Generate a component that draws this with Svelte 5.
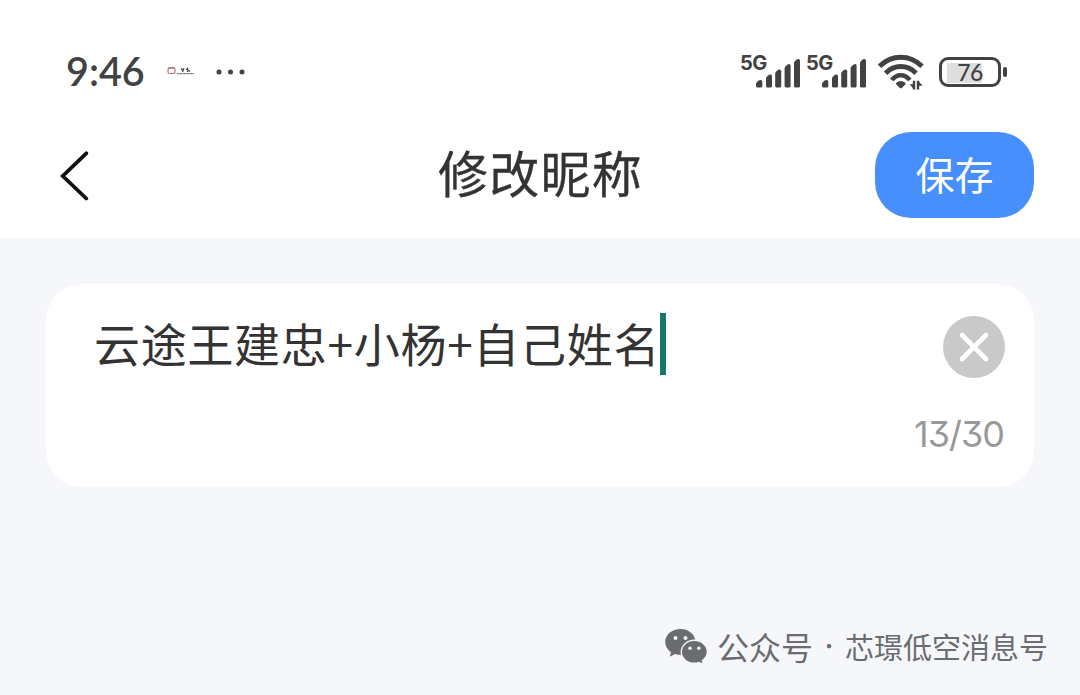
<script lang="ts">
    let name = $state("云途王建忠+小杨+自己姓名");
    const max = 30;
    let count = $derived(name.length);

    const battery = 76;

    const clearName = () => {
        name = "";
    }
</script>

{#snippet signal()}
    <div class="signal">
        <span class="net">5G</span>
        <svg class="bars" width="45" height="30" viewBox="0 0 45 30">
            <path d="M0 28v-2q0-1 1-2l2-1.800q3.300-1 3.300 1.500v4.300q0 1.500-1.500 1.500H1.500Q0 29.500 0 28z" />
            <path d="M10 28v-7.500q0-1 1-2l2-1.800q3-1 3 1.500V28q0 1.500-1.500 1.500h-3Q10 29.500 10 28z" />
            <path d="M19.200 28V15.500q0-1 1-2l2-1.800q3-1 3 1.500V28q0 1.500-1.500 1.500h-3q-1.500 0-1.500-1.500z" />
            <path d="M28.600 28V10.200q0-1 1-2l2-1.800q3-1 3 1.500V28q0 1.500-1.500 1.500h-3q-1.500 0-1.500-1.500z" />
            <path d="M38 28V5q0-1 1-2l2-1.800q3-1 3 1.500V28q0 1.500-1.500 1.500h-3Q38 29.500 38 28z" />
        </svg>
    </div>
{/snippet}

<div class="page">
    <div class="statusBar">
        <span class="time">9:46</span>
        <!-- carrier logo -->
        <svg class="carrier" width="28" height="10" viewBox="0 0 28 10">
            <rect x="1" y="2" width="7" height="5.500" rx="1.500" fill="none" stroke="#c66d77" stroke-width="1.200" />
            <path d="M1.500 1.800H8M10 7.700h17" stroke="#555" stroke-dasharray="2.500 .6" />
            <path d="M14 2.500l2 2m1-2.500l-1.500 4M20.500 1.500v4.500m-1.500-3l4 2.500" stroke="#444" stroke-width="1.200" />
        </svg>
        <svg class="dots" width="30" height="6" viewBox="0 0 30 6">
            <circle cx="3" cy="3" r="2.500" />
            <circle cx="14.500" cy="3" r="2.500" />
            <circle cx="26" cy="3" r="2.500" />
        </svg>

        <div class="statusRight">
            {@render signal()}
            {@render signal()}
            <svg class="wifi" width="46" height="36" viewBox="0 0 46 36">
                <g fill="none" stroke="#424242" stroke-width="4.900">
                    <path d="M1.500 12.300Q11 3.300 22.800 3.300t21.300 9" />
                    <path d="M7.600 19.200Q14 12.500 22.800 12.500t15.200 6.700" />
                    <path d="M13.800 26Q17.500 21.200 22.800 21.200t9 4.800" stroke-width="4.500" />
                </g>
                <path d="M18.100 29q4.700-3.800 9.400 0q.4.600 0 1.200l-3.700 3.800q-1 .7-2 0l-3.700-3.800q-.4-.6 0-1.200z" fill="#424242" />
                <path d="M36 26.800v8.600M40 35.400v-8.600" stroke="#424242" stroke-width="2.400" />
                <path d="M31.500 30.300h4v4.400zM44.600 31.700h-4v-4.400z" fill="#424242" />
            </svg>
            <div class="battery">
                <div class="cell">
                    <div class="level" style="width: {battery}%"></div>
                    <span class="percent">{battery}</span>
                </div>
                <div class="cap"></div>
            </div>
        </div>
    </div>

    <header>
        <button class="back" aria-label="返回">
            <svg width="30" height="50" viewBox="0 0 30 50">
                <path d="M26.300 2.300L2.800 25l23.500 22.500" fill="none" stroke="#111" stroke-width="3.800" stroke-linecap="round" />
            </svg>
        </button>
        <h1>修改昵称</h1>
        <button class="save"><span>保存</span></button>
    </header>

    <main>
        <div class="card">
            <div class="row">
                <div class="field"><span>{name}</span><i class="caret"></i></div>
                <button class="clear" aria-label="清除" onclick={clearName}>
                    <svg width="62" height="62" viewBox="0 0 62 62">
                        <circle cx="31" cy="31" r="31" fill="#c9c9c9" />
                        <path d="M19 19l24 24m0-24l-24 24" stroke="#fff" stroke-width="4.600" stroke-linecap="round" />
                    </svg>
                </button>
            </div>
            <p class="count">{count}/{max}</p>
        </div>
    </main>

    <footer>
        <svg width="43" height="36" viewBox="0 0 43 36">
            <path d="M15.500 0C7 0 .2 5.800.2 13c0 4.200 2.300 7.800 5.800 10.200L4.700 27.800l5.300-2.900q2.800.9 6 .9C24 25.800 30.500 20 30.500 13S24 0 15.500 0z" fill="#6b6c6f" />
            <path d="M29.300 11.300c-7.200 0-13 5.100-13 11.500s5.800 11.500 13 11.500q2.500 0 4.600-.7l4.500 2-1-3.900c3.100-2.200 5-5.400 5-8.900 0-6.400-5.900-11.500-13.100-11.500z" fill="#6b6c6f" stroke="#f5f7fb" stroke-width="1.400" />
            <g fill="#f5f7fb">
                <circle cx="10.500" cy="9" r="2" />
                <circle cx="20.500" cy="9" r="2" />
                <circle cx="25" cy="19.300" r="1.700" />
                <circle cx="33.800" cy="19.300" r="1.700" />
            </g>
        </svg>
        <span class="kind">公众号</span>
        <span class="dot">·</span>
        <span class="account">芯璟低空消息号</span>
    </footer>
</div>

<style>
    :global(body){
        margin: 0;
    }

    .page{
        width: 1080px;
        height: 695px;
        display: flex;
        flex-direction: column;
        overflow: hidden;
        background-color: #f5f7fb;
        color: #333;
        font-family: Lato, "Noto Sans CJK SC", sans-serif;
    }

    button{
        border: 0;
        padding: 0;
        background: none;
        font-family: inherit;
        display: block;
    }

    svg{
        display: block;
        flex: none;
    }

    /* status bar */
    .statusBar{
        height: 115px;
        padding: 28px 73px 0 66px;
        box-sizing: border-box;
        display: flex;
        align-items: center;
        background-color: #fff;
        color: #424242;
    }

    .time{
        width: 79px;
        padding-bottom: 2px;
        font-size: 39.500px;
        line-height: 40px;
        font-weight: 600;
        white-space: nowrap;
    }

    .carrier{
        margin-left: 22px;
        margin-top: -1px;
    }

    .dots{
        margin-left: 21px;
        fill: #424242;
    }

    .statusRight{
        margin-left: auto;
        display: flex;
        align-items: center;
    }

    .signal{
        width: 66px;
        height: 40px;
        display: flex;
    }

    .net{
        width: 16px;
        font: bold 20px/22px Inter, sans-serif;
        letter-spacing: -0.6px;
    }

    .bars{
        margin-top: 6px;
        fill: #424242;
    }

    .wifi{
        margin-left: 6px;
    }

    .battery{
        margin-left: 15px;
        display: flex;
        align-items: center;
    }

    .cell{
        width: 46px;
        height: 18px;
        padding: 3px 5px;
        border: 3.500px solid #424242;
        border-radius: 9px;
        display: grid;
        align-items: center;
    }

    .level{
        grid-area: 1 / 1;
        height: 20px;
        background-color: #dedede;
    }

    .percent{
        grid-area: 1 / 1;
        padding-bottom: 3px;
        text-align: center;
        font-size: 23px;
        line-height: 18px;
        letter-spacing: -0.5px;
        font-weight: 500;
    }

    .cap{
        width: 4px;
        height: 10px;
        margin-left: 2px;
        border-radius: 2px;
        background-color: #424242;
    }

    /* title row */
    header{
        height: 123px;
        padding: 17px 46px 0 60px;
        display: grid;
        grid-template-columns: 1fr auto 1fr;
        align-items: start;
        box-sizing: border-box;
        background-color: #fff;
    }

    .back{
        margin-top: 19px;
    }

    h1{
        margin: 0;
        padding-right: 13px;
        font-size: 50px;
        line-height: 85px;
        letter-spacing: 1.200px;
        font-weight: 400;
        -webkit-text-stroke: 0.3px #333;
    }

    .save{
        width: 159px;
        height: 86px;
        justify-self: end;
        border-radius: 36px;
        background-color: #478ffc;
        color: #fff;
        font-size: 39px;
    }

    .save span{
        display: block;
        padding-bottom: 5px;
    }

    main{
        padding: 46px;
    }

    .card{
        height: 203px;
        box-sizing: border-box;
        padding: 26px 29px 0 48px;
        border-radius: 36px;
        background-color: #fff;
    }

    .row{
        display: flex;
        justify-content: space-between;
        align-items: center;
    }

    .field{
        height: 68px;
        display: flex;
        align-items: center;
        font-family: "Noto Sans CJK SC", sans-serif;
        font-size: 46px;
        letter-spacing: 0.700px;
        white-space: nowrap;
    }

    .field span{
        height: 68px;
        line-height: 64px;
        padding-bottom: 4px;
        box-sizing: border-box;
    }

    .caret{
        width: 6px;
        height: 62px;
        background-color: #14796c;
    }

    .clear{
        margin-top: 6px;
    }

    .count{
        margin: 34px 1px 0 0;
        text-align: right;
        font-family: Inter, sans-serif;
        font-feature-settings: "cv09";
        font-size: 36px;
        line-height: 44px;
        letter-spacing: -1px;
        color: #999;
    }

    footer{
        margin-top: auto;
        padding: 0 32px 26px 0;
        display: flex;
        align-items: center;
        justify-content: flex-end;
        color: #6b6c6f;
        font-family: "Noto Sans CJK SC", sans-serif;
        white-space: nowrap;
    }

    footer svg{
        margin-bottom: 4px;
    }

    footer span{
        line-height: 36px;
        padding-bottom: 5px;
    }

    .kind{
        margin-left: 9px;
        font-size: 32px;
    }

    .dot{
        width: 32px;
        text-align: center;
        font-size: 20px;
    }

    .account{
        font-size: 29px;
    }
</style>
